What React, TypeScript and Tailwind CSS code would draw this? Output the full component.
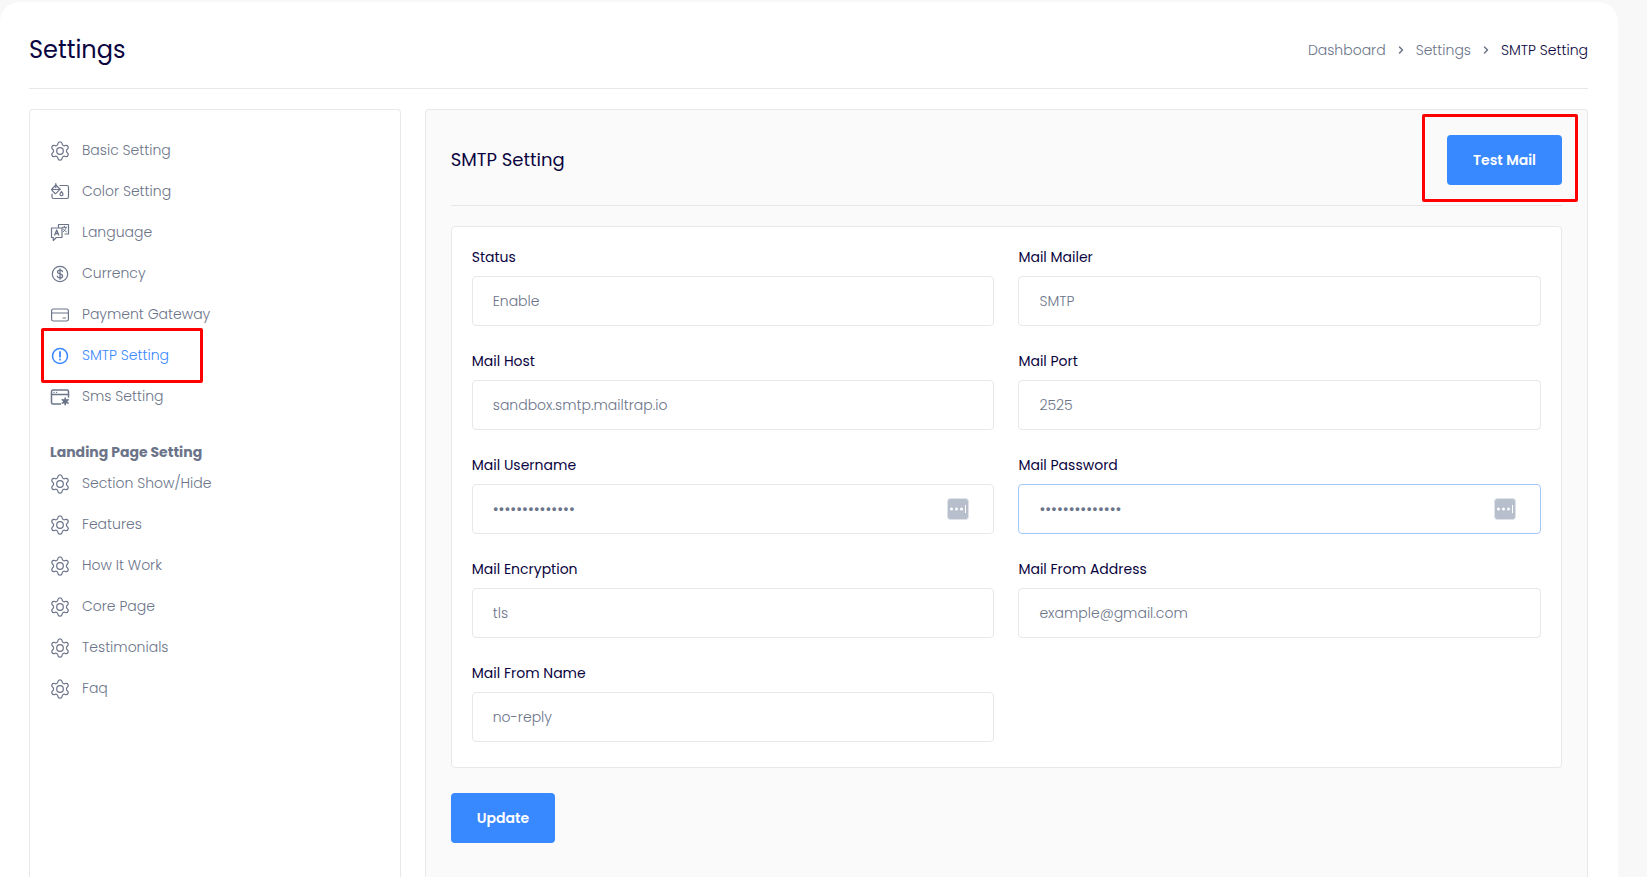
import type { ReactNode } from "react";
import { ChevronRight } from "lucide-react";

function Icon({ children }: { children: ReactNode }) {
  return (
    <svg
      viewBox="0 0 20 20"
      className="size-5 shrink-0"
      fill="none"
      stroke="currentColor"
      strokeWidth="1.2"
      strokeLinecap="round"
      strokeLinejoin="round"
      aria-hidden="true"
    >
      {children}
    </svg>
  );
}

const GearIcon = () => (
  <Icon>
    <g transform="translate(-1 -1) scale(0.917)" strokeWidth="1.35">
      <path d="M9.671 4.136a2.34 2.34 0 0 1 4.659 0 2.34 2.34 0 0 0 3.319 1.915 2.34 2.34 0 0 1 2.33 4.033 2.34 2.34 0 0 0 0 3.831 2.34 2.34 0 0 1-2.33 4.033 2.34 2.34 0 0 0-3.319 1.915 2.34 2.34 0 0 1-4.659 0 2.34 2.34 0 0 0-3.32-1.915 2.34 2.34 0 0 1-2.33-4.033 2.34 2.34 0 0 0 0-3.831A2.34 2.34 0 0 1 6.35 6.051a2.34 2.34 0 0 0 3.319-1.915" />
      <circle cx="12" cy="12" r="3.6" />
    </g>
  </Icon>
);

const ColorIcon = () => (
  <Icon>
    <path d="M10 3.5h7a1.5 1.5 0 0 1 1.5 1.5v10a1.5 1.5 0 0 1-1.5 1.5H3.5A1.5 1.5 0 0 1 2 15v-3" />
    <path d="M5.8 3 L10.2 7.2 6.2 11.2a1 1 0 0 1-1.4 0L2 8.4a1 1 0 0 1 0-1.4z" />
    <path d="M1.8 7.5h8.4M5.8 1.5v4.2" />
    <path d="M11.5 9.5c-.9 1.2-1.5 1.9-1.5 2.7a1.5 1.5 0 0 0 3 0c0-.8-.6-1.5-1.5-2.7z" />
  </Icon>
);

const LanguageIcon = () => (
  <Icon>
    <path d="M8.5 4.500V1.500h10v9.500h-3.500" />
    <path d="M12 5H1.500v9.500h1.800v3l3-3H12z" />
    <path d="M4.700 12l2-5 2 5M5.400 10.500h2.600" strokeWidth="1.3" />
    <path d="M12.300 4.300h4.200M14.400 3.200v1.100M16 4.500c-.4 2-1.500 3.500-2.800 4.200M13.400 6c.6 1.300 1.500 2.200 2.900 2.700" strokeWidth="1" />
  </Icon>
);

const CurrencyIcon = () => (
  <Icon>
    <circle cx="10" cy="10" r="7.7" />
    <path d="M12.5 7.7c-.2-1-1.2-1.6-2.5-1.6s-2.5.7-2.5 1.9c0 2.6 5.1 1.3 5.1 4 0 1.2-1.2 1.9-2.6 1.9s-2.5-.7-2.7-1.7M10 4.8v10.400" strokeWidth="1.3" />
  </Icon>
);

const CardIcon = () => (
  <Icon>
    <rect x="1.6" y="4" width="16.8" height="12" rx="1.8" />
    <path d="M1.6 8h16.8M13 13h2.5" />
  </Icon>
);

const AlertIcon = () => (
  <Icon>
    <circle cx="10" cy="10" r="7.5" strokeWidth="1.5" />
    <path d="M10 6v4.8M10 13.400v.3" strokeWidth="1.8" />
  </Icon>
);

const SmsIcon = () => (
  <Icon>
    <path d="M10.500 17H3a1.500 1.500 0 0 1-1.500-1.500v-11A1.500 1.500 0 0 1 3 3h14a1.500 1.500 0 0 1 1.500 1.500V10" strokeWidth="1.5" />
    <path d="M1.500 7.500h17" strokeWidth="1.5" />
    <path d="M4 5.300h.2M6.500 5.300h.2" strokeWidth="1.3" />
    <circle cx="15.2" cy="14.4" r="1.8" fill="currentColor" />
    <path d="M15.200 11v6.800M12.300 12.700l5.800 3.400M18.100 12.700l-5.800 3.400" strokeWidth="1.6" />
  </Icon>
);

type Item = { label: string; icon: () => ReactNode; active?: boolean };

const general: Item[] = [
  { label: "Basic Setting", icon: GearIcon },
  { label: "Color Setting", icon: ColorIcon },
  { label: "Language", icon: LanguageIcon },
  { label: "Currency", icon: CurrencyIcon },
  { label: "Payment Gateway", icon: CardIcon },
  { label: "SMTP Setting", icon: AlertIcon, active: true },
  { label: "Sms Setting", icon: SmsIcon },
];

const landing: Item[] = [
  "Section Show/Hide",
  "Features",
  "How It Work",
  "Core Page",
  "Testimonials",
  "Faq",
].map((label) => ({ label, icon: GearIcon }));

function NavList({ items }: { items: Item[] }) {
  return (
    <ul className="flex flex-col gap-[19px]">
      {items.map(({ label, icon: ItemIcon, active }) => (
        <li key={label} className="relative flex">
          <a
            href="#"
            aria-current={active ? "page" : undefined}
            className={`flex items-end gap-3 leading-[22px] ${active ? "text-[#3888ff]" : "text-[#6b7489]"}`}
          >
            <ItemIcon />
            {label}
          </a>
          {active && (
            <span className="pointer-events-none absolute -top-4 -left-[9px] h-[55px] w-[162px] rounded-xs border-3 border-[#ff0000]" />
          )}
        </li>
      ))}
    </ul>
  );
}

const control =
  "block h-[50px] w-full appearance-none rounded border bg-white px-5 font-light text-[#6b7489] outline-none";

type FieldProps = {
  id: string;
  label: string;
  value: string;
  kind?: "text" | "password" | "select";
  focused?: boolean;
};

function Field({ id, label, value, kind = "text", focused }: FieldProps) {
  const border = focused ? "border-[#a3c6fb]" : "border-[#e8e8e8]";
  const size = kind === "password" ? "text-base" : "text-sm";
  return (
    <div>
      <label htmlFor={id} className="mb-[9px] block leading-5 font-normal text-[#0a0440]">
        {label}
      </label>
      <div className="relative">
        {kind === "select" ? (
          <select id={id} defaultValue={value} className={`${control} ${border} ${size}`}>
            <option>{value}</option>
          </select>
        ) : (
          <input id={id} type={kind} defaultValue={value} className={`${control} ${border} ${size}`} />
        )}
        {kind === "password" && (
          <svg viewBox="0 0 22 22" className="absolute top-3.5 right-[25px] size-[22px]" aria-hidden="true">
            <rect x="0.5" y="0.5" width="21" height="21" rx="3" fill="#b8bfcc" stroke="#dfe2e8" />
            <g fill="#fff">
              <circle cx="4.5" cy="11" r="1.5" />
              <circle cx="9.5" cy="11" r="1.5" />
              <circle cx="14.5" cy="11" r="1.5" />
              <rect x="18" y="7" width="1" height="8" />
            </g>
          </svg>
        )}
      </div>
    </div>
  );
}

const fields: FieldProps[] = [
  { id: "status", label: "Status", value: "Enable", kind: "select" },
  { id: "mailer", label: "Mail Mailer", value: "SMTP", kind: "select" },
  { id: "host", label: "Mail Host", value: "sandbox.smtp.mailtrap.io" },
  { id: "port", label: "Mail Port", value: "2525" },
  { id: "username", label: "Mail Username", value: "abcdefghijklmn", kind: "password" },
  { id: "password", label: "Mail Password", value: "abcdefghijklmn", kind: "password", focused: true },
  { id: "encryption", label: "Mail Encryption", value: "tls" },
  { id: "from-address", label: "Mail From Address", value: "example@gmail.com" },
  { id: "from-name", label: "Mail From Name", value: "no-reply" },
];

const button = "h-[50px] rounded bg-[#3888ff] px-[26px] font-semibold text-white";

export default function App() {
  return (
    <div className="flex min-h-screen bg-[#f8f8f8] pt-0.5 pr-[29px] font-['Poppins','Inter',sans-serif] text-sm font-light">
      <div className="flex flex-1 flex-col rounded-t-[20px] bg-white pr-[30px] pl-[29px]">
        <header className="flex items-center justify-between border-b border-[#e8e8e8] pt-[30px] pb-5">
          <h1 className="text-2xl leading-9 font-normal text-[#0a0440]">Settings</h1>
          <nav aria-label="Breadcrumb">
            <ol className="flex items-center gap-[9px] text-[#6b7489]">
              <li><a href="#">Dashboard</a></li>
              <li aria-hidden="true"><ChevronRight className="size-3" strokeWidth={3} /></li>
              <li><a href="#">Settings</a></li>
              <li aria-hidden="true"><ChevronRight className="size-3" strokeWidth={3} /></li>
              <li aria-current="page" className="text-[#0a0440]">SMTP Setting</li>
            </ol>
          </nav>
        </header>

        <div className="mt-5 grid flex-1 grid-cols-4 gap-6">
          <aside className="rounded-t border border-b-0 border-[#e8e8e8] px-5 pt-[29px] pb-8">
            <NavList items={general} />
            <h2 className="mt-[35px] mb-[9px] leading-[21px] font-bold text-[#6b7489]">Landing Page Setting</h2>
            <NavList items={landing} />
          </aside>

          <main className="col-span-3 rounded-t border border-b-0 border-[#e8e8e8] bg-[#fafafa] px-[25px] pt-[25px] pb-8">
            <div className="mb-5 flex items-center justify-between border-b border-[#e8e8e8] pb-5">
              <h2 className="text-lg font-normal text-[#0a0440]">SMTP Setting</h2>
              <div className="relative">
                <button type="button" className={button}>Test Mail</button>
                <span className="pointer-events-none absolute -top-[21px] -right-4 -bottom-[17px] -left-[25px] rounded-xs border-3 border-[#ff0000]" />
              </div>
            </div>
            <form onSubmit={(e) => e.preventDefault()}>
              <div className="mb-[25px] grid grid-cols-2 gap-x-6 gap-y-[25px] rounded border border-[#e8e8e8] bg-white px-5 pt-5 pb-[25px]">
                {fields.map((field) => (
                  <Field key={field.id} {...field} />
                ))}
              </div>
              <button type="submit" className={button}>Update</button>
            </form>
          </main>
        </div>
      </div>
    </div>
  );
}
